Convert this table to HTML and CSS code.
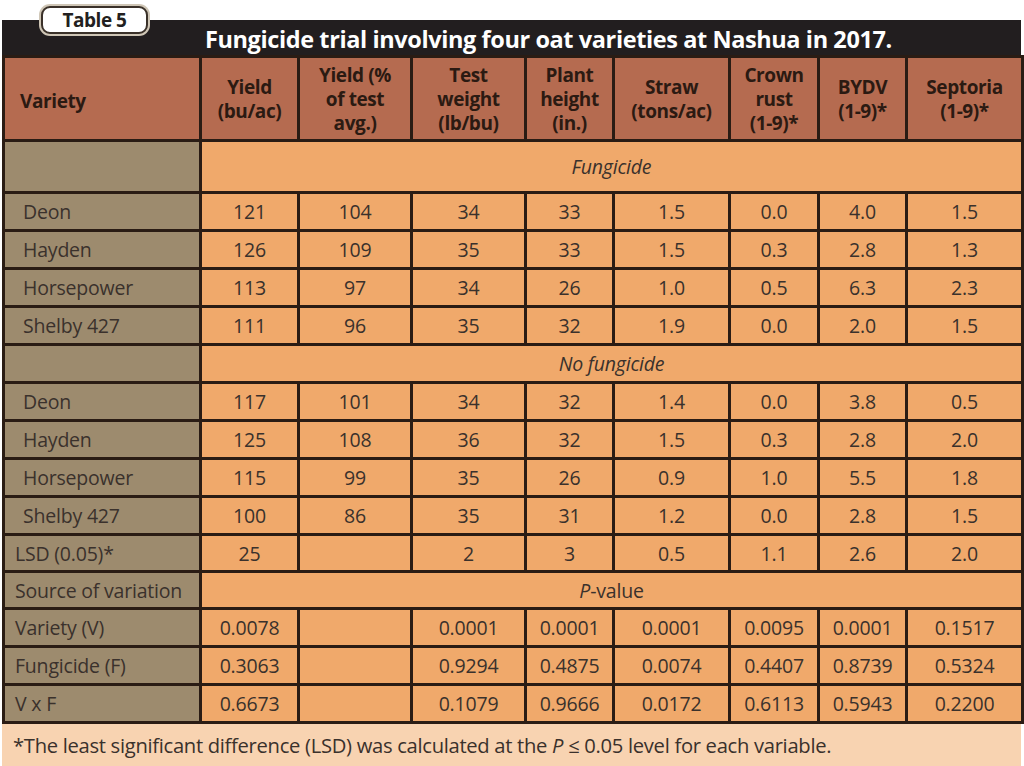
FILE: index.html
```html
<!DOCTYPE html>
<html>
<head>
<meta charset="utf-8">
<link rel="stylesheet" href="styles.css">
</head>
<body>
<div class="page">
  <div class="tab">Table 5</div>
  <div class="titlebar">Fungicide trial involving four oat varieties at Nashua in 2017.</div>
  <table class="data">
    <colgroup>
      <col class="c-var"><col class="c-y"><col class="c-yp"><col class="c-tw"><col class="c-ph"><col class="c-st"><col class="c-cr"><col class="c-by"><col class="c-se">
    </colgroup>
    <thead>
      <tr class="head">
        <th class="h-var">Variety</th>
        <th>Yield<br>(bu/ac)</th>
        <th>Yield (%<br>of test<br>avg.)</th>
        <th>Test<br>weight<br>(lb/bu)</th>
        <th>Plant<br>height<br>(in.)</th>
        <th>Straw<br>(tons/ac)</th>
        <th>Crown<br>rust<br>(1-9)*</th>
        <th>BYDV<br>(1-9)*</th>
        <th>Septoria<br>(1-9)*</th>
      </tr>
    </thead>
    <tbody>
      <tr class="sec tall"><td class="lab"></td><td colspan="8" class="sect"><em>Fungicide</em></td></tr>
      <tr><td class="lab ind">Deon</td><td>121</td><td>104</td><td>34</td><td>33</td><td>1.5</td><td>0.0</td><td>4.0</td><td>1.5</td></tr>
      <tr><td class="lab ind">Hayden</td><td>126</td><td>109</td><td>35</td><td>33</td><td>1.5</td><td>0.3</td><td>2.8</td><td>1.3</td></tr>
      <tr><td class="lab ind">Horsepower</td><td>113</td><td>97</td><td>34</td><td>26</td><td>1.0</td><td>0.5</td><td>6.3</td><td>2.3</td></tr>
      <tr><td class="lab ind">Shelby 427</td><td>111</td><td>96</td><td>35</td><td>32</td><td>1.9</td><td>0.0</td><td>2.0</td><td>1.5</td></tr>
      <tr class="sec"><td class="lab"></td><td colspan="8" class="sect"><em>No fungicide</em></td></tr>
      <tr><td class="lab ind">Deon</td><td>117</td><td>101</td><td>34</td><td>32</td><td>1.4</td><td>0.0</td><td>3.8</td><td>0.5</td></tr>
      <tr><td class="lab ind">Hayden</td><td>125</td><td>108</td><td>36</td><td>32</td><td>1.5</td><td>0.3</td><td>2.8</td><td>2.0</td></tr>
      <tr><td class="lab ind">Horsepower</td><td>115</td><td>99</td><td>35</td><td>26</td><td>0.9</td><td>1.0</td><td>5.5</td><td>1.8</td></tr>
      <tr><td class="lab ind">Shelby 427</td><td>100</td><td>86</td><td>35</td><td>31</td><td>1.2</td><td>0.0</td><td>2.8</td><td>1.5</td></tr>
      <tr class="short"><td class="lab">LSD (0.05)*</td><td>25</td><td></td><td>2</td><td>3</td><td>0.5</td><td>1.1</td><td>2.6</td><td>2.0</td></tr>
      <tr class="short"><td class="lab">Source of variation</td><td colspan="8" class="sect"><em>P</em>-value</td></tr>
      <tr><td class="lab">Variety (V)</td><td>0.0078</td><td></td><td>0.0001</td><td>0.0001</td><td>0.0001</td><td>0.0095</td><td>0.0001</td><td>0.1517</td></tr>
      <tr><td class="lab">Fungicide (F)</td><td>0.3063</td><td></td><td>0.9294</td><td>0.4875</td><td>0.0074</td><td>0.4407</td><td>0.8739</td><td>0.5324</td></tr>
      <tr><td class="lab">V x F</td><td>0.6673</td><td></td><td>0.1079</td><td>0.9666</td><td>0.0172</td><td>0.6113</td><td>0.5943</td><td>0.2200</td></tr>
    </tbody>
  </table>
  <div class="foot">*The least significant difference (LSD) was calculated at the <em>P</em> ≤ 0.05 level for each variable.</div>
</div>
</body>
</html>
```
FILE: styles.css
```css
html, body {
  margin: 0;
  padding: 0;
  background: #ffffff;
}
.page {
  position: relative;
  width: 1019px;
  margin-left: 2px;
  padding-top: 20px;
  font-family: "Open Sans", "Noto Sans", sans-serif;
}
.tab {
  position: absolute;
  left: 39px;
  top: 6px;
  width: 103px;
  height: 24px;
  background: #ffffff;
  border: 2px solid #3a3129;
  border-radius: 9px;
  box-shadow: 0 0 0 2px #cfc6b6;
  font-weight: 700;
  font-size: 19px;
  line-height: 24px;
  text-align: center;
  color: #231f20;
  letter-spacing: -0.5px;
  z-index: 2;
}
.titlebar {
  background: #221e1f;
  color: #ffffff;
  height: 35px;
  line-height: 39px;
  font-weight: 700;
  font-size: 23.5px;
  padding-left: 203px;
  letter-spacing: -0.4px;
  white-space: nowrap;
}
.data {
  border-collapse: collapse;
  table-layout: fixed;
  width: 1019px;
}
.c-var { width: 197px; }
.c-y { width: 98px; }
.c-yp { width: 113px; }
.c-tw { width: 114px; }
.c-ph { width: 88px; }
.c-st { width: 116px; }
.c-cr { width: 89px; }
.c-by { width: 88px; }
.c-se { width: 116px; }
.data th, .data td {
  border: 3px solid #2a1c14;
  padding: 0;
}
.head th {
  background: #b56b50;
  color: #2b1a12;
  font-weight: 700;
  font-size: 19px;
  line-height: 24px;
  height: 77px;
  text-align: center;
  vertical-align: middle;
  letter-spacing: -0.4px;
}
.head th.h-var {
  text-align: left;
  padding-left: 15px;
  padding-top: 4px;
}
.data tbody tr {
  height: 38px;
}
.data tbody tr.tall {
  height: 52px;
}
.data tbody tr.short {
  height: 37px;
}
.data td {
  background: #f0a96b;
  color: #3a312c;
  font-size: 19.5px;
  text-align: center;
  vertical-align: middle;
  letter-spacing: -0.2px;
}
.data td.lab {
  background: #9d8b6e;
  text-align: left;
  padding-left: 10px;
  white-space: nowrap;
}
.data td.lab.ind {
  padding-left: 18px;
}
.data td.sect {
  text-align: center;
}
.foot {
  background: #f8d3b1;
  height: 43px;
  line-height: 43px;
  font-size: 20.2px;
  color: #3a312c;
  padding-left: 11px;
  letter-spacing: -0.3px;
  white-space: nowrap;
}
```
